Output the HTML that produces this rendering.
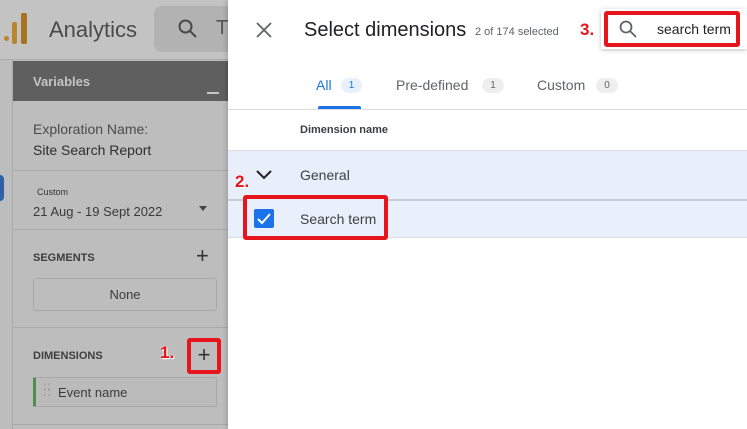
<!DOCTYPE html>
<html><head><style>
*{margin:0;padding:0;box-sizing:border-box}
body{width:747px;height:429px;overflow:hidden;position:relative;font-family:"Liberation Sans",sans-serif;background:#fff}
.a{position:absolute}
.red{border:4px solid #e8141b;border-radius:3px}
.lbl{color:#e8141b;font-weight:bold;font-size:17px;text-shadow:0 0 2px #fff,1px 1px 1px #fff}
</style></head><body>
<div class="a" style="left:0;top:0;width:228px;height:429px;background:#bdbdbd"></div>
<div class="a" style="left:0;top:0;width:228px;height:60px;background:#c3c3c3;border-bottom:1px solid #aaa"></div>
<div class="a" style="left:4px;top:36px;width:5px;height:5px;border-radius:50%;background:#b9852e"></div>
<div class="a" style="left:12px;top:22px;width:5px;height:22px;background:#b9852e;border-radius:2px"></div>
<div class="a" style="left:21px;top:13px;width:6px;height:31px;background:#a8731f;border-radius:2px"></div>
<div class="a" style="left:49px;top:17px;font-size:22px;color:#4a4a4a">Analytics</div>
<div class="a" style="left:154px;top:6px;width:80px;height:46px;background:#b2b2b2;border-radius:8px"></div>
<svg class="a" style="left:177px;top:18px" width="22" height="22" viewBox="0 0 22 22"><circle cx="8.5" cy="8.5" r="6" fill="none" stroke="#4a4a4a" stroke-width="2"/><path d="M13 13l6 6" stroke="#4a4a4a" stroke-width="2"/></svg>
<div class="a" style="left:216px;top:17px;font-size:20px;color:#555">T</div>
<div class="a" style="left:12px;top:60px;width:1px;height:369px;background:#a9a9a9"></div>
<div class="a" style="left:0;top:175px;width:4px;height:26px;background:#2f5fa8;border-radius:0 13px 13px 0"></div>
<div class="a" style="left:13px;top:61px;width:215px;height:40px;background:#5f5f5f"></div>
<div class="a" style="left:33px;top:74px;font-size:13px;font-weight:bold;color:#c4c4c4">Variables</div>
<div class="a" style="left:207px;top:92px;width:12px;height:2px;background:#c4c4c4"></div>
<div class="a" style="left:33px;top:121px;font-size:14px;color:#4b4b4b">Exploration Name:</div>
<div class="a" style="left:33px;top:142px;font-size:14px;color:#2e2e2e">Site Search Report</div>
<div class="a" style="left:13px;top:170px;width:215px;height:1px;background:#a9a9a9"></div>
<div class="a" style="left:37px;top:187px;font-size:9px;color:#333">Custom</div>
<div class="a" style="left:33px;top:204px;font-size:13px;color:#3a3a3a">21 Aug - 19 Sept 2022</div>
<div class="a" style="left:199px;top:206px;border-left:4px solid transparent;border-right:4px solid transparent;border-top:5px solid #444"></div>
<div class="a" style="left:13px;top:229px;width:215px;height:1px;background:#a9a9a9"></div>
<div class="a" style="left:33px;top:252px;font-size:11px;font-weight:bold;color:#3e3e3e">SEGMENTS</div>
<div class="a" style="left:196px;top:243px;font-size:22px;color:#333">+</div>
<div class="a" style="left:33px;top:278px;width:184px;height:33px;border:1px solid #a8a8a8;border-radius:3px;text-align:center;line-height:31px;font-size:13px;color:#3c3c3c">None</div>
<div class="a" style="left:13px;top:327px;width:215px;height:1px;background:#a9a9a9"></div>
<div class="a" style="left:33px;top:350px;font-size:11px;font-weight:bold;color:#3e3e3e">DIMENSIONS</div>
<div class="a lbl" style="left:160px;top:343px">1.</div>
<div class="a red" style="left:187px;top:338px;width:34px;height:36px;text-align:center;line-height:26px;font-size:22px;color:#333">+</div>
<div class="a" style="left:33px;top:377px;width:184px;height:30px;border:1px solid #a8a8a8;border-left:3px solid #4e8f4e;border-radius:2px;background:#bbb"></div>
<div class="a" style="left:43px;top:383px;font-size:12px;color:#888;line-height:6px;letter-spacing:1px">::<br>::</div>
<div class="a" style="left:58px;top:385px;font-size:13px;color:#3c3c3c">Event name</div>
<div class="a" style="left:13px;top:424px;width:215px;height:1px;background:#a9a9a9"></div>
<div class="a" style="left:228px;top:0;width:519px;height:429px;background:#fff;box-shadow:-2px 0 4px rgba(0,0,0,.15)"></div>
<svg class="a" style="left:256px;top:22px" width="16" height="16" viewBox="0 0 16 16"><path d="M1 1L15 15M15 1L1 15" stroke="#5f6368" stroke-width="1.8"/></svg>
<div class="a" style="left:304px;top:19px;font-size:20px;color:#202124">Select dimensions</div>
<div class="a" style="left:475px;top:26px;font-size:11px;color:#5f6368">2 of 174 selected</div>
<div class="a lbl" style="left:580px;top:20px">3.</div>
<div class="a" style="left:601px;top:9px;width:146px;height:40px;background:#fff;box-shadow:0 1px 4px rgba(0,0,0,.25)"></div>
<div class="a red" style="left:604px;top:11px;width:136px;height:36px"></div>
<svg class="a" style="left:618px;top:19px" width="20" height="20" viewBox="0 0 20 20"><circle cx="8" cy="8" r="5.5" fill="none" stroke="#5f6368" stroke-width="1.8"/><path d="M12 12l6 6" stroke="#5f6368" stroke-width="1.8"/></svg>
<div class="a" style="left:657px;top:21px;font-size:14px;color:#202124">search term</div>
<div class="a" style="left:316px;top:77px;font-size:14px;color:#1a73e8">All</div>
<div class="a" style="left:341px;top:78px;width:21px;height:15px;border-radius:8px;background:#e8f0fe;color:#1a73e8;font-size:10px;text-align:center;line-height:15px">1</div>
<div class="a" style="left:318px;top:106px;width:43px;height:3px;background:#1a73e8;border-radius:2px 2px 0 0"></div>
<div class="a" style="left:396px;top:77px;font-size:14px;color:#5f6368">Pre-defined</div>
<div class="a" style="left:482px;top:78px;width:22px;height:15px;border-radius:8px;background:#eee;color:#5f6368;font-size:10px;text-align:center;line-height:15px">1</div>
<div class="a" style="left:537px;top:77px;font-size:14px;color:#5f6368">Custom</div>
<div class="a" style="left:596px;top:78px;width:22px;height:15px;border-radius:8px;background:#eee;color:#5f6368;font-size:10px;text-align:center;line-height:15px">0</div>
<div class="a" style="left:228px;top:109px;width:519px;height:1px;background:#dadce0"></div>
<div class="a" style="left:300px;top:124px;font-size:11px;font-weight:bold;color:#3c4043">Dimension name</div>
<div class="a" style="left:228px;top:150px;width:519px;height:49px;background:#e8effa;border-top:1px solid #dadce0"></div>
<div class="a" style="left:228px;top:199px;width:519px;height:39px;background:#eaf0fb;border-top:2px solid #c9ccd2;border-bottom:1px solid #dadce0"></div>
<svg class="a" style="left:256px;top:169px" width="16" height="12" viewBox="0 0 16 12"><path d="M1 2l7 7 7-7" fill="none" stroke="#202124" stroke-width="2"/></svg>
<div class="a lbl" style="left:235px;top:172px">2.</div>
<div class="a" style="left:300px;top:167px;font-size:14px;color:#3c4043">General</div>
<div class="a red" style="left:243px;top:195px;width:145px;height:45px;background:#eaf0fb"></div>
<div class="a" style="left:254px;top:209px;width:20px;height:19px;background:#1a73e8;border-radius:2px"></div>
<svg class="a" style="left:254px;top:209px" width="20" height="19" viewBox="0 0 20 19"><path d="M4 10l4 4 8-9" fill="none" stroke="#fff" stroke-width="2"/></svg>
<div class="a" style="left:300px;top:211px;font-size:14px;color:#3c4043">Search term</div>
</body></html>
